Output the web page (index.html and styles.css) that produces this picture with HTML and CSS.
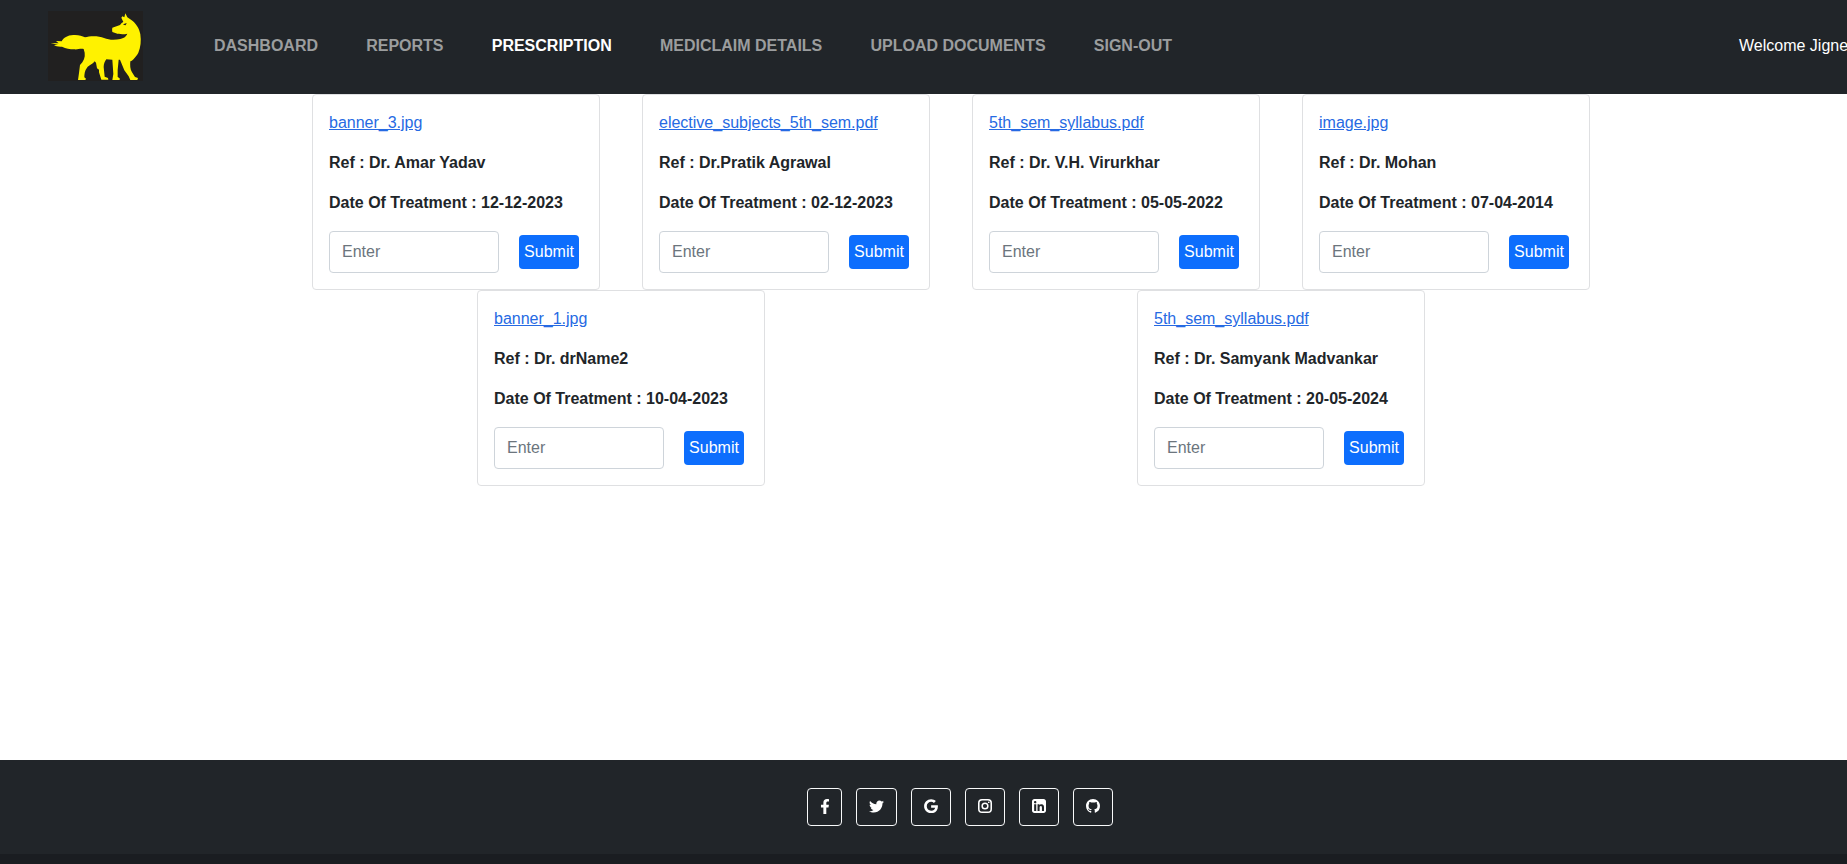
FILE: index.html
```html
<!DOCTYPE html>
<html lang="en">
<head>
<meta charset="utf-8">
<title>Prescription</title>
<link rel="stylesheet" href="styles.css">
</head>
<body>
<header class="navbar">
  <svg class="logo" viewBox="54 33 285 210" preserveAspectRatio="none">
    <rect x="54" y="33" width="285" height="210" fill="#212020"/>
    <path fill="#fff200" d="M62 129 L86 130 L78 123 L95 124 C101 113 112 106 130 105 C146 104 156 108 165 112 C180 107 207 107 222 114 C238 121 257 120 271 117 C281 114 287 111 290 105 L292 101 C281 104 266 103 258 100 L247 96 C246 91 246 87 247 83 L270 75 C274 70 276 68 280 66 L274 53 L277 49 L283 52 L286 40 L292 52 L304 60 C318 70 328 85 331 103 C334 124 332 142 325 158 C319 169 309 181 301 184 C300 195 300 207 306 217 L315 231 L324 234 L322 240 L301 240 L296 229 L283 211 L270 179 L266 179 L263 210 L263 231 L269 235 L269 240 L247 240 L250 222 L247 179 L229 178 C225 184 221 190 221 201 L224 230 L234 234 L235 239 L214 239 L207 217 L207 209 L201 205 L198 188 L194 184 C190 191 176 196 171 203 C164 212 163 222 163 232 L168 236 L166 240 L144 240 L147 219 L150 195 C161 184 166 172 164 158 L161 147 C150 145 144 149 133 148 C119 148 108 146 96 140 C85 141 77 138 72 135 L84 134 Z"/>
    <path fill="#212020" d="M279 73 L290 69 L287 76 L283 75 Z"/>
  </svg>
  <nav class="menu">
    <a class="menu-link">DASHBOARD</a>
    <a class="menu-link">REPORTS</a>
    <a class="menu-link active">PRESCRIPTION</a>
    <a class="menu-link">MEDICLAIM DETAILS</a>
    <a class="menu-link">UPLOAD DOCUMENTS</a>
    <a class="menu-link">SIGN-OUT</a>
  </nav>
  <span class="welcome">Welcome Jigne</span>
</header>

<main class="content">
  <div class="cards">
    <article class="card">
      <a class="file" href="#">banner_3.jpg</a>
      <p class="line">Ref : Dr. Amar Yadav</p>
      <p class="line">Date Of Treatment : 12-12-2023</p>
      <form class="entry"><input class="field" type="text" placeholder="Enter"><button class="submit" type="button">Submit</button></form>
    </article>
    <article class="card">
      <a class="file" href="#">elective_subjects_5th_sem.pdf</a>
      <p class="line">Ref : Dr.Pratik Agrawal</p>
      <p class="line">Date Of Treatment : 02-12-2023</p>
      <form class="entry"><input class="field" type="text" placeholder="Enter"><button class="submit" type="button">Submit</button></form>
    </article>
    <article class="card">
      <a class="file" href="#">5th_sem_syllabus.pdf</a>
      <p class="line">Ref : Dr. V.H. Virurkhar</p>
      <p class="line">Date Of Treatment : 05-05-2022</p>
      <form class="entry"><input class="field" type="text" placeholder="Enter"><button class="submit" type="button">Submit</button></form>
    </article>
    <article class="card">
      <a class="file" href="#">image.jpg</a>
      <p class="line">Ref : Dr. Mohan</p>
      <p class="line">Date Of Treatment : 07-04-2014</p>
      <form class="entry"><input class="field" type="text" placeholder="Enter"><button class="submit" type="button">Submit</button></form>
    </article>
    <article class="card">
      <a class="file" href="#">banner_1.jpg</a>
      <p class="line">Ref : Dr. drName2</p>
      <p class="line">Date Of Treatment : 10-04-2023</p>
      <form class="entry"><input class="field" type="text" placeholder="Enter"><button class="submit" type="button">Submit</button></form>
    </article>
    <article class="card">
      <a class="file" href="#">5th_sem_syllabus.pdf</a>
      <p class="line">Ref : Dr. Samyank Madvankar</p>
      <p class="line">Date Of Treatment : 20-05-2024</p>
      <form class="entry"><input class="field" type="text" placeholder="Enter"><button class="submit" type="button">Submit</button></form>
    </article>
  </div>
</main>

<footer class="footer">
  <div class="social">
    <a class="social-link narrow"><svg viewBox="0 0 320 512" width="10" height="15"><path d="M279.14 288l14.22-92.66h-88.91v-60.13c0-25.35 12.42-50.06 52.24-50.06h40.42V6.26S260.43 0 225.36 0c-73.22 0-121.08 44.38-121.08 124.72v70.62H22.89V288h81.39v224h100.17V288z"/></svg></a>
    <a class="social-link wide"><svg viewBox="0 0 512 512" width="15" height="15"><path d="M459.37 151.716c.325 4.548.325 9.097.325 13.645 0 138.72-105.583 298.558-298.558 298.558-59.452 0-114.68-17.219-161.137-47.106 8.447.974 16.568 1.299 25.34 1.299 49.055 0 94.213-16.568 130.274-44.832-46.132-.975-84.792-31.188-98.112-72.772 6.498.974 12.995 1.624 19.818 1.624 9.421 0 18.843-1.3 27.614-3.573-48.081-9.747-84.143-51.98-84.143-102.985v-1.299c13.969 7.797 30.214 12.67 47.431 13.319-28.264-18.843-46.781-51.005-46.781-87.391 0-19.492 5.197-37.36 14.294-52.954 51.655 63.675 129.3 105.258 216.365 109.807-1.624-7.797-2.599-15.918-2.599-24.04 0-57.828 46.782-104.934 104.934-104.934 30.213 0 57.502 12.67 76.67 33.137 23.715-4.548 46.456-13.32 66.599-25.34-7.798 24.366-24.366 44.833-46.132 57.827 21.117-2.273 41.584-8.122 60.426-16.243-14.292 20.791-32.161 39.308-52.628 54.253z"/></svg></a>
    <a class="social-link"><svg viewBox="0 0 488 512" width="14" height="14.500"><path d="M488 261.8C488 403.3 391.1 504 248 504 110.8 504 0 393.2 0 256S110.8 8 248 8c66.800 0 123 24.500 166.300 64.900l-67.500 64.900C258.500 52.600 94.300 116.600 94.300 256c0 86.500 69.100 156.600 153.700 156.600 98.200 0 135-70.400 140.800-106.900H248v-85.300h236.100c2.300 12.700 3.900 24.900 3.900 41.400z"/></svg></a>
    <a class="social-link"><svg viewBox="0 0 448 512" width="14" height="16"><path fill-rule="evenodd" d="M128 32h192a128 128 0 0 1 128 128v192a128 128 0 0 1-128 128H128A128 128 0 0 1 0 352V160A128 128 0 0 1 128 32zm7 47a85 85 0 0 0-85 85v184a85 85 0 0 0 85 85h178a85 85 0 0 0 85-85V164a85 85 0 0 0-85-85zM224 141a115 115 0 1 1 0 230 115 115 0 0 1 0-230zm0 48a67 67 0 1 0 0 134 67 67 0 0 0 0-134zM344 109a27 27 0 1 1 0 54 27 27 0 0 1 0-54z"/></svg></a>
    <a class="social-link"><svg viewBox="0 0 448 512" width="14" height="16"><path d="M370 32H78C35 32 0 67 0 110v292c0 43 35 78 78 78h292c43 0 78-35 78-78V110c0-43-35-78-78-78zM135.400 416H69V202.200h66.500V416zm-33.200-243c-21.300 0-38.500-17.300-38.500-38.500S80.900 96 102.200 96c21.200 0 38.500 17.300 38.500 38.500 0 21.300-17.200 38.500-38.500 38.500zm282.100 243h-66.400V312c0-24.800-.5-56.700-34.500-56.700-34.600 0-39.900 27-39.900 54.900V416h-66.400V202.200h63.700v29.200h.9c8.900-16.800 30.600-34.500 62.900-34.500 67.200 0 79.700 44.300 79.700 101.900V416z"/></svg></a>
    <a class="social-link"><svg viewBox="0 0 16 16" width="14" height="14"><path d="M8 0C3.580 0 0 3.580 0 8c0 3.540 2.290 6.530 5.470 7.590.4.070.55-.17.55-.38 0-.19-.01-.82-.01-1.490-2.010.37-2.530-.49-2.690-.94-.09-.23-.48-.94-.82-1.130-.28-.15-.68-.52-.01-.53.63-.01 1.080.58 1.230.82.72 1.210 1.870.87 2.330.66.07-.52.28-.87.51-1.070-1.780-.2-3.640-.89-3.640-3.950 0-.87.31-1.590.82-2.150-.08-.2-.36-1.020.08-2.120 0 0 .67-.21 2.200.82.64-.18 1.320-.27 2-.27s1.360.09 2 .27c1.530-1.040 2.200-.82 2.200-.82.44 1.100.16 1.920.08 2.120.51.56.82 1.270.82 2.150 0 3.070-1.870 3.750-3.650 3.950.29.25.54.73.54 1.480 0 1.070-.01 1.930-.01 2.200 0 .21.15.46.55.38A8.010 8.010 0 0 0 16 8c0-4.420-3.580-8-8-8z"/></svg></a>
  </div>
  <div class="footer-strip"></div>
</footer>
</body>
</html>
```
FILE: styles.css
```css
* {
  box-sizing: border-box;
}

body {
  margin: 0;
  height: 864px;
  display: flex;
  flex-direction: column;
  overflow: hidden;
  background: #fff;
  color: #212529;
  font: 16px/24px "Liberation Sans", Arial, sans-serif;
}

.navbar {
  flex: none;
  display: flex;
  height: 94px;
  padding: 11px 0 0 48px;
  background: #212529;
  white-space: nowrap;
}

.logo {
  flex: none;
  width: 95px;
  height: 70px;
}

.menu {
  display: flex;
  gap: 48.2px;
  margin-left: 71px;
  padding-top: 23px;
}

.menu-link {
  color: #9b9d9e;
  font-weight: 700;
}

.menu-link.active {
  color: #fff;
}

.welcome {
  flex: none;
  width: 108px;
  margin-left: auto;
  padding-top: 23px;
  color: #fff;
}

.content {
  flex: 1;
  padding-left: 55px;
}

.cards {
  display: flex;
  flex-wrap: wrap;
  justify-content: space-around;
  width: 1320px;
  margin: 0 auto;
}

.card {
  width: 288px;
  height: 196px;
  margin: 0 20px;
  padding: 16px;
  border: 1px solid #dfe0e2;
  border-radius: 4px;
}

.file {
  display: block;
  color: #266ae3;
  text-decoration: underline;
}

.line {
  margin: 16px 0 0;
  font-weight: 700;
}

.entry {
  display: flex;
  align-items: center;
  gap: 20px;
  margin: 16px 0 0;
}

.field {
  width: 170px;
  height: 42px;
  padding: 0 12px;
  border: 1px solid #ced4da;
  border-radius: 4px;
  background: #fff;
  font: inherit;
}

.field::placeholder {
  color: #6c757d;
  opacity: 1;
}

.submit {
  width: 60px;
  height: 34px;
  padding: 0;
  border: 0;
  border-radius: 4px;
  background: #0d6efd;
  color: #fff;
  font: inherit;
}

.footer {
  flex: none;
  display: flex;
  flex-direction: column;
  justify-content: space-between;
  height: 104px;
  padding-top: 28px;
  background: #212529;
}

.social {
  display: flex;
  gap: 14px;
  padding-left: 807px;
}

.social-link {
  display: flex;
  align-items: center;
  justify-content: center;
  width: 40px;
  height: 38px;
  padding-bottom: 2px;
  border: 1px solid #f8f9fa;
  border-radius: 4px;
}

.social-link.narrow {
  width: 35px;
}

.social-link.wide {
  width: 41px;
}

.social-link svg {
  fill: #fff;
}

.footer-strip {
  height: 10px;
  background: #1a1d21;
}
```
